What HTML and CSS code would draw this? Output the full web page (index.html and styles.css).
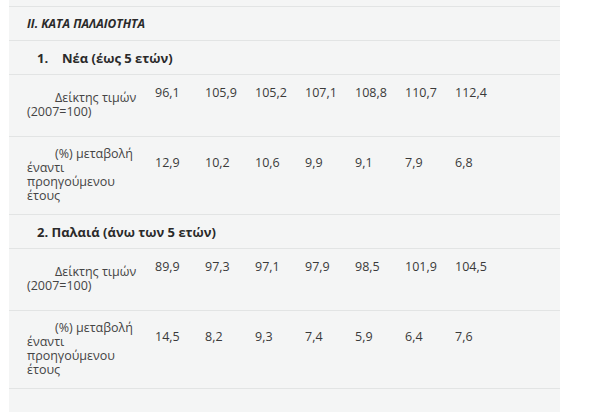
FILE: index.html
```html
<!DOCTYPE html>
<html lang="el">
<head>
<meta charset="utf-8">
<link rel="stylesheet" href="styles.css">
</head>
<body>
<table class="stats">
  <colgroup>
    <col class="c-label">
    <col class="c-num"><col class="c-num"><col class="c-num"><col class="c-num">
    <col class="c-num"><col class="c-num"><col class="c-num">
    <col class="c-fill">
  </colgroup>
  <tbody>
    <tr class="spacer"><td colspan="9"></td></tr>
    <tr class="section"><td colspan="9"><em>II. ΚΑΤΑ ΠΑΛΑΙΟΤΗΤΑ</em></td></tr>
    <tr class="group"><td colspan="9"><span class="num">1.</span>Νέα (έως 5 ετών)</td></tr>
    <tr class="data">
      <td class="label">Δείκτης τιμών (2007=100)</td>
      <td>96,1</td><td>105,9</td><td>105,2</td><td>107,1</td><td>108,8</td><td>110,7</td><td>112,4</td><td></td>
    </tr>
    <tr class="data">
      <td class="label">(%) μεταβολή έναντι προηγούμενου έτους</td>
      <td>12,9</td><td>10,2</td><td>10,6</td><td>9,9</td><td>9,1</td><td>7,9</td><td>6,8</td><td></td>
    </tr>
    <tr class="group group2"><td colspan="9">2. Παλαιά (άνω των 5 ετών)</td></tr>
    <tr class="data">
      <td class="label">Δείκτης τιμών (2007=100)</td>
      <td>89,9</td><td>97,3</td><td>97,1</td><td>97,9</td><td>98,5</td><td>101,9</td><td>104,5</td><td></td>
    </tr>
    <tr class="data">
      <td class="label">(%) μεταβολή έναντι προηγούμενου έτους</td>
      <td>14,5</td><td>8,2</td><td>9,3</td><td>7,4</td><td>5,9</td><td>6,4</td><td>7,6</td><td></td>
    </tr>
    <tr class="empty"><td colspan="9"></td></tr>
  </tbody>
</table>
</body>
</html>
```

FILE: styles.css
```css
html, body {
  margin: 0;
  padding: 0;
  background: #ffffff;
}

body {
  padding-left: 9px;
  font-family: "Open Sans", "Noto Sans", sans-serif;
  font-size: 12.5px;
  line-height: 14px;
  color: #3a3a3a;
}

.stats {
  width: 551px;
  table-layout: fixed;
  border-collapse: separate;
  border-spacing: 0;
  background: #f4f5f5;
}

.c-label { width: 141px; }
.c-num { width: 50px; }
.c-fill { width: 60px; }

.stats td {
  border-top: 1px solid #e2e4e4;
  vertical-align: middle;
  text-align: left;
  padding: 11px 5px 36px 5px;
  white-space: nowrap;
}

.stats .spacer td {
  border-top: 0;
  padding: 0;
  height: 6px;
}

.stats .section td,
.stats .group td {
  padding: 10px 10px 9px 18px;
  font-weight: 700;
  color: #2a2a2a;
}

.stats .section td {
  font-size: 12px;
}

.stats .section em {
  font-style: italic;
}

.stats .group td {
  padding-left: 28px;
  font-size: 13px;
}

.stats .group .num {
  display: inline-block;
  width: 25px;
}

.stats td.label {
  white-space: normal;
  padding: 10px 10px 11px 18px;
  text-indent: 28px;
  color: #444;
}

.stats .empty td {
  height: 40px;
  padding: 0;
}
```
